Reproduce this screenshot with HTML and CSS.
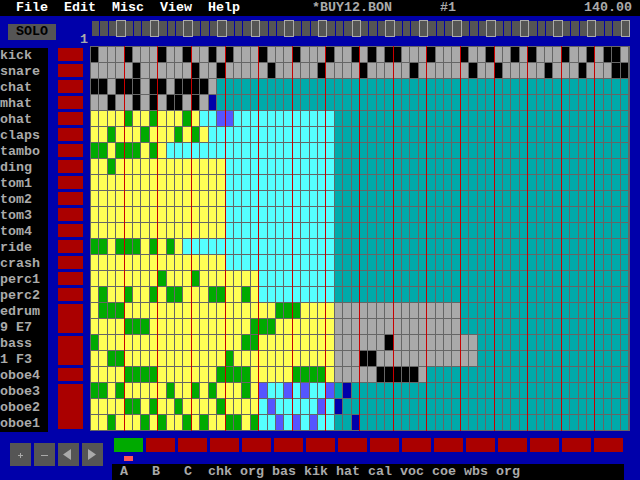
FILE: index.html
```html
<!DOCTYPE html>
<html lang="en">
<head>
<meta charset="utf-8">
<title>*BUY12.BON</title>
<link rel="stylesheet" href="styles.css">
</head>
<body>
<div class="screen">
  <header class="menubar">
    <nav class="menu">
      <span>File</span><span>Edit</span><span>Misc</span><span>View</span><span>Help</span>
    </nav>
    <span class="song">*BUY12.BON</span>
    <span class="pattern-no">#1</span>
    <span class="tempo">140.00</span>
  </header>
  <section class="transport">
    <div class="solo">SOLO</div>
    <div class="page-no">1</div>
    <div class="slider" id="slider"></div>
  </section>
  <main class="tracks">
    <div class="labels">
      <div>kick</div><div>snare</div><div>chat</div><div>mhat</div><div>ohat</div><div>claps</div>
      <div>tambo</div><div>ding</div><div>tom1</div><div>tom2</div><div>tom3</div><div>tom4</div>
      <div>ride</div><div>crash</div><div>perc1</div><div>perc2</div><div>edrum</div><div>9 E7</div>
      <div>bass</div><div>1 F3</div><div>oboe4</div><div>oboe3</div><div>oboe2</div><div>oboe1</div>
    </div>
    <div class="mutes">
      <i></i><i></i><i></i><i></i><i></i><i></i><i></i><i></i>
      <i></i><i></i><i></i><i></i><i></i><i></i><i></i><i></i>
      <i class="span2"></i><i class="span2"></i><i></i><i class="span3"></i>
    </div>
    <div class="grid-wrap">
      <div class="grid" id="grid"></div>
      <div class="bars" id="bars"></div>
    </div>
  </main>
  <footer class="bottom">
    <div class="tools">
      <button class="tool"><svg viewBox="0 0 21 23" width="21" height="23"><path d="M8 12h5v1H8zM10 10h1v5h-1z" class="glyph"/></svg></button>
      <button class="tool"><svg viewBox="0 0 21 23" width="21" height="23"><path d="M7 12h7v1H7z" class="glyph"/></svg></button>
      <button class="tool"><svg viewBox="0 0 21 23" width="21" height="23"><path d="M13 6v11L5 11.5z" class="glyph"/></svg></button>
      <button class="tool"><svg viewBox="0 0 21 23" width="21" height="23"><path d="M6 6v11l8-5.500z" class="glyph"/></svg></button>
    </div>
    <div class="song-seq">
      <div class="slots">
        <i class="on"></i><i></i><i></i><i></i><i></i><i></i><i></i><i></i>
        <i></i><i></i><i></i><i></i><i></i><i></i><i></i><i></i>
      </div>
      <div class="cursor"></div>
      <div class="names"> A   B   C  chk org bas kik hat cal voc coe wbs org</div>
    </div>
  </footer>
</div>
<script src="script.js"></script>
</body>
</html>
```
FILE: styles.css
```css
* { box-sizing: border-box; }
html, body { margin: 0; padding: 0; }
body { background: #0000aa; }
.screen {
  width: 640px;
  height: 480px;
  overflow: hidden;
  background: #0000aa;
  font: bold 13.33px/16px "Liberation Mono", monospace;
  color: #aaaaaa;
  display: flex;
  flex-direction: column;
}
.menubar {
  height: 16px;
  flex: none;
  background: #000;
  display: flex;
  padding-left: 16px;
  white-space: pre;
}
.menu { display: flex; gap: 16px; color: #fff; }
.song { margin-left: 72px; }
.pattern-no { margin-left: 48px; }
.tempo { margin-left: 128px; }

.transport {
  height: 30px;
  flex: none;
  display: flex;
}
.solo {
  width: 48px;
  height: 16px;
  margin: 8px 0 0 8px;
  padding-left: 8px;
  background: #555555;
  color: #000;
}
.page-no { width: 8px; margin: 16px 0 0 24px; height: 14px; }
.slider {
  margin: 5px 0 0 3px;
  height: 15px;
  padding-left: 1px;
  display: grid;
  grid-template-columns: repeat(64, 8.41px);
}
.slider i { display: block; margin-right: 1px; background: #555555; }
.slider i.mark { outline: 1px solid #aaaaaa; position: relative; }

.tracks { flex: none; height: 386px; display: flex; align-items: flex-start; }
.labels {
  width: 48px;
  margin-top: 2px;
  background: #000;
}
.labels div { height: 16px; white-space: pre; }
.mutes {
  width: 25px;
  margin: 2px 7px 0 10px;
  display: grid;
  grid-auto-rows: 13px;
  gap: 3px;
}
.mutes i { display: block; background: #aa0000; }
.mutes .span2 { grid-row: span 2; }
.mutes .span3 { grid-row: span 3; }

.grid-wrap { position: relative; width: 540px; }
.grid {
  padding: 1px 0 0 1px;
  background: #666666;
  display: grid;
  grid-template-columns: repeat(64, 8.41px);
  grid-auto-rows: 16px;
}
.grid i { display: block; margin: 0 1px 1px 0; }
.k { background: #000000; }
.g { background: #aaaaaa; }
.t { background: #00aaaa; }
.y { background: #ffff55; }
.v { background: #00aa00; }
.c { background: #55ffff; }
.l { background: #5555ff; }
.b { background: #0000aa; }

.bars {
  position: absolute;
  inset: 0;
  display: grid;
  grid-template-columns: repeat(16, 33.64px);
}
.bars i { display: block; border-left: 1px solid #c80000; }
.bars i:first-child { border-left: 0; }

.bottom { flex: 1; display: flex; min-height: 0; }
.tools { display: flex; gap: 3px; margin: 11px 0 0 10px; height: 23px; }
.tool {
  width: 21px;
  height: 23px;
  padding: 0;
  border: 0;
  background: #555555;
  display: block;
}
.tool svg { display: block; }
.glyph { fill: #aaaaaa; }

.song-seq { margin-left: 9px; width: 512px; position: relative; }
.slots {
  margin: 6px 0 0 2px;
  height: 14px;
  display: flex;
  gap: 3px;
}
.slots i { display: block; width: 29px; background: #aa0000; }
.slots .on { background: #00aa00; }
.cursor { width: 9px; height: 5px; margin: 4px 0 0 12px; background: #ff5555; }
.names {
  margin-top: 3px;
  height: 16px;
  background: #000;
  white-space: pre;
}
```
FILE: script.js
```js
var rows = [
  ["g64", {k:[0,4,8,11,14,16,20,24,28,31,33,35,36,40,44,47,50,52,56,59,61,62]}],
  ["g64", {k:[5,12,15,21,27,32,38,45,48,54,58,62,63]}],
  ["g15 t49", {k:[0,1,3,4,5,7,8,10,11,12,13]}],
  ["g15 t49", {k:[2,5,7,9,10,12], b:[14]}],
  ["y13 c16 t35", {v:[4,7,11], l:[15,16]}],
  ["y14 c15 t35", {v:[2,6,10,12]}],
  ["y9 c20 t35", {v:[0,1,3,4,5,7]}],
  ["y16 c13 t35", {v:[2]}],
  ["y16 c13 t35", {}],
  ["y16 c13 t35", {}],
  ["y16 c13 t35", {}],
  ["y16 c13 t35", {}],
  ["y11 c18 t35", {v:[0,1,3,4,5,7,9]}],
  ["y16 c13 t35", {}],
  ["y20 c9 t35", {v:[8,12]}],
  ["y20 c9 t35", {v:[1,4,7,9,10,14,15,18]}],
  ["y29 g15 t20", {v:[1,2,3,22,23,24]}],
  ["y29 g15 t20", {v:[4,5,6,19,20,21]}],
  ["y29 g17 t18", {v:[0,18,19], k:[35]}],
  ["y29 g17 t18", {v:[2,3,16], k:[32,33]}],
  ["y29 g11 t24", {v:[4,5,6,7,15,16,17,18,24,25,26,27], k:[34,35,36,37,38]}],
  ["y20 c9 t35", {v:[0,1,3,9,12,14,18], l:[20,23,25,28], b:[30]}],
  ["y20 c9 t35", {v:[4,5,7,10,15], l:[21,27], b:[29]}],
  ["y20 c9 t35", {v:[2,6,8,11,13,16,17,19], l:[22,24,26], b:[31]}]
];

function addCell(parent, cls) {
  var el = document.createElement("i");
  if (cls) el.className = cls;
  parent.appendChild(el);
}

var grid = document.getElementById("grid");
rows.forEach(function (row) {
  var cells = [];
  row[0].split(" ").forEach(function (run) {
    for (var n = parseInt(run.slice(1), 10); n > 0; n--) cells.push(run[0]);
  });
  Object.keys(row[1]).forEach(function (colour) {
    row[1][colour].forEach(function (col) { cells[col] = colour; });
  });
  cells.forEach(function (c) { addCell(grid, c); });
});

var slider = document.getElementById("slider");
for (var s = 0; s < 64; s++) addCell(slider, s % 4 === 3 ? "mark" : "");

var bars = document.getElementById("bars");
for (var b = 0; b < 16; b++) addCell(bars, "");
```
